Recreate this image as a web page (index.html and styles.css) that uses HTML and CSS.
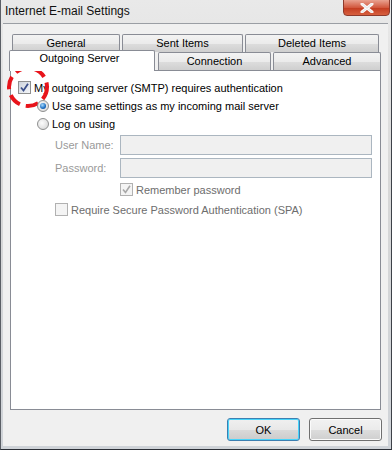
FILE: index.html
```html
<!DOCTYPE html>
<html lang="en">
<head>
  <meta charset="UTF-8" />
  <title>Internet E-mail Settings</title>
  <link rel="stylesheet" href="styles.css">
</head>
<body>
  <div class="window">
    <div class="titlebar">
      <span class="title">Internet E-mail Settings</span>
      <span class="close">
        <svg width="16" height="10" viewBox="0 0 16 10"><path d="M3 1 L13 9 M13 1 L3 9" stroke="#fff" stroke-width="3" stroke-linecap="round"/><path d="M3 1 L13 9 M13 1 L3 9" stroke="#e9e9e9" stroke-width="1.6" stroke-linecap="round"/></svg>
      </span>
    </div>

    <div class="client">
      <div class="tabs">
        <div class="tab-row back">
          <div class="tab w-general">General</div>
          <div class="tab w-sent">Sent Items</div>
          <div class="tab w-deleted">Deleted Items</div>
        </div>
        <div class="tab-row front">
          <div class="tab selected w-outgoing">Outgoing Server</div>
          <div class="tab w-connection">Connection</div>
          <div class="tab w-advanced">Advanced</div>
        </div>
      </div>

      <div class="panel">
        <label class="row first">
          <span class="check on"><svg width="9" height="9" viewBox="0 0 9 9"><path d="M1 4.5 L3.5 7.5 L8 0.8" fill="none" stroke="#3b4f8a" stroke-width="1.8"/></svg></span>
          <span>My outgoing server (SMTP) requires authentication</span>
          <svg class="mark" width="46" height="46" viewBox="0 0 46 46"><circle cx="23" cy="23" r="19" fill="none" stroke="#e8141b" stroke-width="4" stroke-dasharray="13 6"/></svg>
        </label>
        <label class="row indent">
          <span class="radio on"><span class="dot"></span></span>
          <span>Use same settings as my incoming mail server</span>
        </label>
        <label class="row indent">
          <span class="radio"></span>
          <span>Log on using</span>
        </label>

        <div class="fields">
          <div class="field">
            <span class="field-label">User Name:</span>
            <span class="input"></span>
          </div>
          <div class="field">
            <span class="field-label">Password:</span>
            <span class="input"></span>
          </div>
        </div>

        <label class="row remember disabled">
          <span class="check off"><svg width="9" height="9" viewBox="0 0 9 9"><path d="M1 4.5 L3.5 7.5 L8 0.8" fill="none" stroke="#a8a8a8" stroke-width="1.6"/></svg></span>
          <span>Remember password</span>
        </label>
        <label class="row spa disabled">
          <span class="check off"></span>
          <span>Require Secure Password Authentication (SPA)</span>
        </label>
      </div>

      <div class="buttons">
        <button class="btn default">OK</button>
        <button class="btn">Cancel</button>
      </div>
    </div>
  </div>
</body>
</html>
```

FILE: styles.css
```css
html, body {
  margin: 0;
  padding: 0;
}

body {
  font-family: 'Liberation Sans', Arial, sans-serif;
  font-size: 11px;
  color: #000;
  background: #dfe3e8;
}

.window {
  width: 392px;
  height: 450px;
  box-sizing: border-box;
  display: flex;
  flex-direction: column;
  padding: 0 3px 3px 2px;
  background: linear-gradient(#e9e9e9, #d8d8d8 40%, #cfd3d8);
  border-left: 1px solid #5b5f66;
  border-right: 1px solid #3d4148;
  border-bottom: 1px solid #2b2f36;
}

.titlebar {
  height: 23px;
  display: flex;
  align-items: flex-start;
  justify-content: space-between;
  flex-shrink: 0;
}

.title {
  font-size: 12px;
  margin-top: 4px;
  margin-left: 2px;
  color: #111;
}

.close {
  width: 45px;
  height: 15px;
  margin-top: -1px;
  margin-right: -2px;
  border: 1px solid #8e3a2c;
  border-radius: 0 0 4px 4px;
  background: linear-gradient(#e9a290, #d2593f 50%, #c23a1f 51%, #d7603f);
  display: flex;
  align-items: center;
  justify-content: center;
}

.client {
  flex: 1;
  background: #f0f0f0;
  border-top: 1px solid #9a9ea4;
  padding: 10px 6px 0 7px;
  display: flex;
  flex-direction: column;
}

/* tabs */
.tabs {
  height: 36px;
}

.tab-row {
  display: flex;
  height: 18px;
}

.tab-row.back {
  padding-left: 2px;
  gap: 2px;
}

.tab-row.front {
  gap: 2px;
}

.tab {
  box-sizing: border-box;
  height: 18px;
  border: 1px solid #898c95;
  border-bottom: none;
  border-radius: 2px 2px 0 0;
  background: linear-gradient(#f3f3f3, #ebebeb 50%, #dddddd 51%, #cfcfcf);
  text-align: center;
  line-height: 17px;
}

.w-general { width: 108px; }
.w-sent { width: 121px; }
.w-deleted { width: 134px; }
.w-connection { width: 113px; margin-left: 1px; }
.w-advanced { width: 108px; }

.tab.selected {
  position: relative;
  z-index: 2;
  width: 146px;
  height: 21px;
  margin-top: -2px;
  margin-left: -1px;
  background: #fff;
  padding-right: 5px;
  line-height: 15px;
}

.panel {
  position: relative;
  box-sizing: border-box;
  width: 371px;
  height: 340px;
  background: #fff;
  border: 1px solid #898c95;
  padding: 10px 0 0 7px;
}

.row {
  display: flex;
  align-items: center;
  gap: 3px;
  height: 13px;
  position: relative;
}

.row.indent {
  padding-left: 19px;
  margin-top: 5px;
}

.check {
  width: 13px;
  height: 13px;
  box-sizing: border-box;
  border: 1px solid #8e8f8f;
  background: linear-gradient(135deg, #dcdcdc, #fbfbfb);
  display: flex;
  align-items: center;
  justify-content: center;
  flex-shrink: 0;
}

.check.on {
  background: linear-gradient(135deg, #cdd3dc, #f4f6f9);
}

.check.off {
  border-color: #b1b1b1;
  background: #f4f4f4;
}

.radio {
  width: 12px;
  height: 12px;
  box-sizing: border-box;
  border: 1px solid #8e8f8f;
  border-radius: 50%;
  background: radial-gradient(circle at 40% 40%, #fcfcfc, #d2d2d2);
  display: flex;
  align-items: center;
  justify-content: center;
  flex-shrink: 0;
}

.radio .dot {
  width: 6px;
  height: 6px;
  border-radius: 50%;
  background: radial-gradient(circle at 40% 35%, #a9dcff, #1a6cc0 60%, #0d3f86);
}

.mark {
  position: absolute;
  left: -13px;
  top: -17px;
}

/* disabled fields */
.fields {
  margin-top: 5px;
  display: flex;
  flex-direction: column;
  gap: 3px;
}

.field {
  display: flex;
  align-items: center;
  height: 20px;
}

.field-label {
  width: 65px;
  padding-left: 37px;
  color: #9a9a9a;
  flex-shrink: 0;
}

.input {
  box-sizing: border-box;
  width: 252px;
  height: 20px;
  border: 1px solid #abb6c0;
  background: #f0f0f0;
}

.disabled {
  color: #6d6d6d;
}

.row.remember {
  padding-left: 102px;
  margin-top: 5px;
}

.row.spa {
  padding-left: 37px;
  margin-top: 7px;
}

/* dialog buttons */
.buttons {
  display: flex;
  justify-content: flex-end;
  gap: 9px;
  padding: 8px 0 0 0;
}

.btn {
  width: 73px;
  height: 23px;
  font-family: inherit;
  font-size: 11px;
  color: #000;
  border: 1px solid #707070;
  border-radius: 3px;
  background: linear-gradient(#f2f2f2, #ebebeb 50%, #dddddd 51%, #cfcfcf);
  box-shadow: inset 0 0 0 1px #fbfbfb;
  padding: 0;
}

.btn.default {
  border-color: #3c7fb1;
  box-shadow: inset 0 0 0 1px #48d4fa;
  background: linear-gradient(#f0f0f0, #e8e8e8 50%, #dadada 51%, #cbcbcb);
}
```
